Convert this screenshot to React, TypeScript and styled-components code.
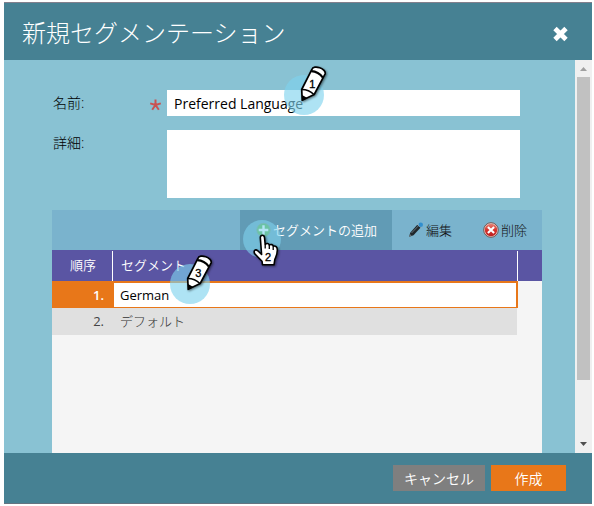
import React from "react";
import styled, { createGlobalStyle } from "styled-components";

const GlobalStyle = createGlobalStyle`
  * { box-sizing: border-box; }
  body {
    margin: 0;
    background: #fff;
    font-family: "Open Sans", "Noto Sans CJK JP", sans-serif;
    font-size: 13px;
    color: #000;
  }
`;

const Dialog = styled.div`
  position: relative;
  display: flex;
  flex-direction: column;
  width: 588px;
  height: 502px;
  margin: 2px 0 0 4px;
  overflow: hidden;
  background: #89c2d3;
`;

const TitleBar = styled.header`
  display: flex;
  align-items: center;
  justify-content: space-between;
  flex: 0 0 58px;
  padding: 3px 23px 0 18px;
  border-top: 1px solid #83808d;
  background: #468193;
`;

const Title = styled.h1`
  margin: 0;
  color: #fff;
  font-size: 24px;
  font-weight: 300;
  line-height: 36px;
`;

const CloseButton = styled.button`
  display: flex;
  padding: 0;
  border: 0;
  background: none;
`;

const Body = styled.div`
  display: flex;
  flex: 1;
  min-height: 0;
`;

const Content = styled.main`
  flex: 1;
  padding: 30px 33px 0 48px;
  overflow: hidden;
`;

const Field = styled.div<{ $height: number }>`
  display: flex;
  width: 468px;
  height: ${(p) => p.$height}px;
  margin-bottom: 14px;
`;

const Label = styled.label`
  width: 97px;
  font-size: 14px;
  font-weight: 300;
  line-height: 26px;
  padding-left: 1px;
`;

const Required = styled.span`
  display: flex;
  width: 18px;
  padding-top: 9px;
`;

const TextInput = styled.input`
  flex: 1;
  min-width: 0;
  padding: 2px 7px 0;
  border: 0;
  outline: 0;
  background: #fff;
  font: 14px/24px "Open Sans", sans-serif;
  color: #000;
`;

const TextArea = styled.textarea`
  flex: 1;
  border: 0;
  outline: 0;
  resize: none;
  background: #fff;
`;

const Grid = styled.section`
  display: flex;
  flex-direction: column;
  height: 243px;
  width: 490px;
  margin-top: -2px;
  background: #f5f5f5;
`;

const Toolbar = styled.div`
  display: flex;
  justify-content: flex-end;
  height: 40px;
  background: #7ab3cd;
`;

const ToolButton = styled.button<{ $width: number; $active?: boolean }>`
  display: flex;
  align-items: center;
  justify-content: flex-end;
  gap: 2px;
  width: ${(p) => p.$width}px;
  padding: 0 15px 0 0;
  border: 0;
  background: ${(p) => (p.$active ? "#619bb5" : "transparent")};
  color: ${(p) => (p.$active ? "#fff" : "#111")};
  font: ${(p) => (p.$active ? 350 : 300)} 13px/20px "Noto Sans CJK JP", sans-serif;
  white-space: nowrap;
`;

const HeadRow = styled.div`
  display: grid;
  grid-template-columns: 60px 405px 25px;
  height: 31px;
  padding-top: 1px;
  background: #5a55a3;
  color: #fff;
  line-height: 28px;
  font-family: "Noto Sans CJK JP", sans-serif;
  font-weight: 350;
`;

const HeadCell = styled.div<{ $center?: boolean }>`
  padding-left: ${(p) => (p.$center ? 2 : 8)}px;
  text-align: ${(p) => (p.$center ? "center" : "left")};
  & + & { border-left: 1px solid #fff; }
`;

const Row = styled.div<{ $selected?: boolean }>`
  display: grid;
  grid-template-columns: 62px 1fr;
  width: ${(p) => (p.$selected ? 466 : 465)}px;
  height: 27px;
  line-height: ${(p) => (p.$selected ? 25 : 26)}px;
  border: solid #e87719;
  border-width: ${(p) => (p.$selected ? "2px 2px 1px 0" : 0)};
  background: ${(p) => (p.$selected ? "#fff" : "#e0e0e0")};
  color: ${(p) => (p.$selected ? "#000" : "#333")};
`;

const OrderCell = styled.div<{ $selected?: boolean }>`
  padding-right: 10px;
  text-align: right;
  background: ${(p) => (p.$selected ? "#e87719" : "transparent")};
  color: ${(p) => (p.$selected ? "#fff" : "#444")};
  font-weight: ${(p) => (p.$selected ? 600 : 400)};
  line-height: ${(p) => (p.$selected ? 24 : 26)}px;
`;

const SegmentCell = styled.div<{ $light?: boolean }>`
  padding-left: 6px;
  font-weight: ${(p) => (p.$light ? 300 : 400)};
`;

const Scrollbar = styled.div`
  display: flex;
  flex-direction: column;
  align-items: center;
  justify-content: space-between;
  width: 17px;
  background: #f0f0f0;
`;

const Thumb = styled.div`
  width: 13px;
  height: 303px;
  margin-bottom: 56px;
  background: #c1c1c1;
`;

const ScrollArrow = styled.svg`
  display: block;
  flex: 0 0 17px;
`;

const Footer = styled.footer`
  display: flex;
  align-items: flex-start;
  justify-content: flex-end;
  gap: 6px;
  flex: 0 0 51px;
  padding: 12px 26px 0;
  border-bottom: 1px solid #637481;
  background: #468193;
`;

const ActionButton = styled.button<{ $primary?: boolean }>`
  width: ${(p) => (p.$primary ? 75 : 92)}px;
  height: 26px;
  padding: 0;
  border: 0;
  background: ${(p) => (p.$primary ? "#e87719" : "#7f7f7f")};
  color: #fff;
  font: 350 14px/25px "Noto Sans CJK JP", sans-serif;
`;

const Marker = styled.svg<{ $x: number; $y: number }>`
  position: absolute;
  left: ${(p) => p.$x}px;
  top: ${(p) => p.$y}px;
  overflow: visible;
  pointer-events: none;
`;

const PointerShape = styled.g`
  filter: drop-shadow(1.5px 1.5px 1px rgba(0, 0, 0, 0.5));
`;

const MarkerNumber = styled.text`
  font: 11px "Liberation Sans", sans-serif;
  text-anchor: middle;
  fill: #000;
  stroke: #000;
  stroke-width: 0.35px;
`;

// A numbered pencil over a translucent disc; the disc spans 40px.
function PencilMarker({ x, y, step }: { x: number; y: number; step: number }) {
  return (
    <Marker $x={x} $y={y} width="40" height="40" viewBox="0 0 40 40">
      <circle cx="20" cy="20" r="20" fill="#7ed2ee" fillOpacity="0.63" />
      <PointerShape>
        <path
          d="M17.7 14.5 27.9-5.6C29.4-10.8 43-6.2 41-.9L30.2 19.5 18.2 25.3Z"
          fill="#fff"
          stroke="#000"
          strokeWidth="1.7"
          strokeLinejoin="round"
        />
        <path d="M27.2-3.9Q34.5-3.5 38.9 2.6" fill="none" stroke="#000" strokeWidth="2.1" />
        <path d="M17.9 14.6Q24.8 14.6 30 19.6" fill="none" stroke="#000" strokeWidth="1.5" />
        <path d="M18 20 23.4 23 18 26Z" fill="#000" />
      </PointerShape>
      <MarkerNumber x="28.2" y="12.8">{step}</MarkerNumber>
    </Marker>
  );
}

function HandMarker() {
  return (
    <Marker $x={239} $y={218} width="38" height="38" viewBox="0 0 38 38">
      <circle cx="19" cy="19" r="19" fill="#7ed2ee" fillOpacity="0.6" />
      <PointerShape>
        <path
          d="M17.3 17.5C17.3 14.5 21.2 14.7 21.5 17.5L22.2 24.5C23.5 22.8 26 23.5 26.2 25C28 23.8 30.2 24.8 30.2 26.2C32.5 25.5 34.3 27 34.3 29.5C34.6 34 33.2 36.2 31.8 39.5L31 44.8H19.5L19 41.2L12.2 34.3C9.8 31.2 12.2 28.7 14.8 30.8L18.6 34.5Z"
          fill="#fff"
          stroke="#000"
          strokeWidth="1.6"
          strokeLinejoin="round"
        />
        <path d="M22.2 24.5v4M26.3 25v4M30.2 26.5v3.5" stroke="#000" strokeWidth="1.3" />
      </PointerShape>
      <MarkerNumber x="25" y="40.5">2</MarkerNumber>
    </Marker>
  );
}

const AddIcon = () => (
  <svg width="15" height="16" viewBox="0 0 15 16">
    <circle cx="7.5" cy="8" r="6.7" fill="#4eae35" stroke="#6f9570" />
    <path d="M7.5 3.2v9.6M2.7 8h9.6" stroke="#fff" strokeWidth="2.4" />
  </svg>
);

const EditIcon = () => (
  <svg width="16" height="16" viewBox="0 0 16 16">
    <path d="M1.2 14.8 2.2 10.7 9.3 2.8 12.7 5.6 5.5 13.2Z" fill="#20282c" />
    <path d="m3.5 11 6.8-7" stroke="#65747b" />
    <path d="m9.2 2.8 1.1-1.2 3.5 3-1.1 1.2Z" fill="#a6b8bd" />
    <circle cx="12.7" cy="2.8" r="2.3" fill="#318fce" />
    <path d="m1 15 1-3 1.7 1.7Z" fill="#69767b" />
  </svg>
);

const DeleteIcon = () => (
  <svg width="16" height="16" viewBox="0 0 16 16">
    <defs>
      <linearGradient id="delete-red" x2="0" y2="1">
        <stop stopColor="#e78678" />
        <stop offset=".5" stopColor="#d6332d" />
        <stop offset="1" stopColor="#bb2020" />
      </linearGradient>
    </defs>
    <circle cx="8" cy="8" r="7.3" fill="#f1d0cc" stroke="#705653" />
    <circle cx="8" cy="8" r="6.2" fill="url(#delete-red)" />
    <path d="m4.9 4.9 6.2 6.2m0-6.2-6.2 6.2" stroke="#fff" strokeWidth="2.1" />
  </svg>
);

export default function App() {
  return (
    <>
      <GlobalStyle />
      <Dialog role="dialog">
        <TitleBar>
          <Title>新規セグメンテーション</Title>
          <CloseButton aria-label="閉じる">
            <svg width="17" height="17" viewBox="0 0 17 17">
              <path d="m3 3.5 11 11M14 3.5 3 14.5" stroke="#fff" strokeWidth="4.8" />
            </svg>
          </CloseButton>
        </TitleBar>
        <Body>
          <Content>
            <Field $height={26}>
              <Label>名前:</Label>
              <Required>
                <svg width="13" height="13" viewBox="0 0 13 13">
                  <path
                    d="M6.5 6V.6M6.5 6 1.2 4.4M6.5 6 11.8 4.4M6.5 6 3.2 10.8M6.5 6 9.8 10.8"
                    stroke="#c95252"
                    strokeWidth="2"
                  />
                </svg>
              </Required>
              <TextInput defaultValue="Preferred Language" />
            </Field>
            <Field $height={68}>
              <Label>詳細:</Label>
              <Required />
              <TextArea />
            </Field>
            <Grid>
              <Toolbar>
                <ToolButton $width={152} $active>
                  <AddIcon />
                  セグメントの追加
                </ToolButton>
                <ToolButton $width={75}>
                  <EditIcon />
                  編集
                </ToolButton>
                <ToolButton $width={75}>
                  <DeleteIcon />
                  削除
                </ToolButton>
              </Toolbar>
              <HeadRow>
                <HeadCell $center>順序</HeadCell>
                <HeadCell>セグメント</HeadCell>
                <HeadCell />
              </HeadRow>
              <Row $selected>
                <OrderCell $selected>1.</OrderCell>
                <SegmentCell>German</SegmentCell>
              </Row>
              <Row>
                <OrderCell>2.</OrderCell>
                <SegmentCell $light>デフォルト</SegmentCell>
              </Row>
            </Grid>
          </Content>
          <Scrollbar>
            <ScrollArrow width="17" height="17" viewBox="0 0 17 17">
              <path d="m5 11 3.5-4 3.5 4Z" fill="#a0a0a0" />
            </ScrollArrow>
            <Thumb />
            <ScrollArrow width="17" height="17" viewBox="0 0 17 17">
              <path d="m5 6 3.5 4L12 6Z" fill="#505050" />
            </ScrollArrow>
          </Scrollbar>
        </Body>
        <Footer>
          <ActionButton>キャンセル</ActionButton>
          <ActionButton $primary>作成</ActionButton>
        </Footer>
        <PencilMarker x={280} y={73} step={1} />
        <HandMarker />
        <PencilMarker x={166} y={262} step={3} />
      </Dialog>
    </>
  );
}
